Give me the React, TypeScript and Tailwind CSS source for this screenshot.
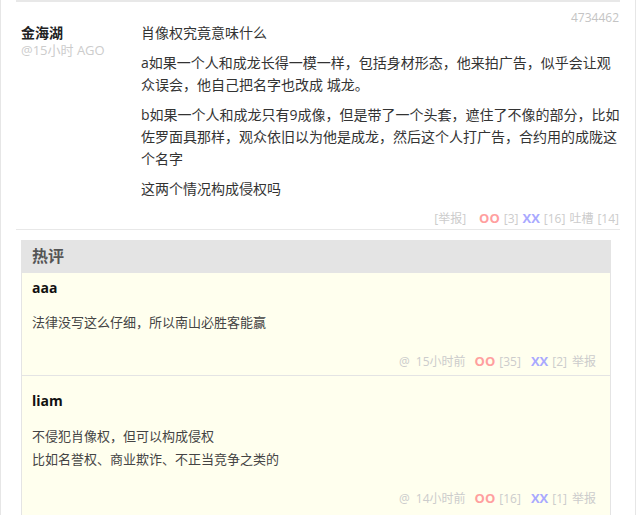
const FONT = "font-['Open_Sans','Noto_Sans_CJK_SC',sans-serif]";

type Hot = {
  name: string;
  lines: string[];
  time: string;
  oo: number;
  xx: number;
  pad: string;
  gap: string;
};

const HOT: Hot[] = [
  {
    name: "aaa",
    lines: ["法律没写这么仔细，所以南山必胜客能赢"],
    time: "15小时前",
    oo: 35,
    xx: 2,
    pad: "pt-[4px] pb-[3px]",
    gap: "mt-[12px]",
  },
  {
    name: "liam",
    lines: ["不侵犯肖像权，但可以构成侵权", "比如名誉权、商业欺诈、不正当竞争之类的"],
    time: "14小时前",
    oo: 16,
    xx: 1,
    pad: "pt-[14px] pb-[8px]",
    gap: "mt-[13px]",
  },
];

export default function App() {
  return (
    <div className={`w-[641px] h-[515px] overflow-hidden bg-white ${FONT}`}>
      <div className="w-[636px] h-full border-l border-r border-[#e6e6e6] px-[15px]">
        {/* 主评论 */}
        <div className="border-t-2 border-b border-[#e8e8e8] pr-[1px]">
          <div className="pt-[10px] text-right text-[12px] leading-[12px] text-[#c4c4c4]">
            4734462
          </div>
          <div className="flex -mt-[2px]">
            <div className="w-[125px] shrink-0 pl-[5px]">
              <p className="text-[14px] leading-[22px] font-bold text-[#222]">金海湖</p>
              <p className="text-[13px] leading-[12px] text-[#cccccc]">@15小时 AGO</p>
            </div>
            <div className="w-[481px] shrink-0 text-[14px] leading-[22px] text-[#333]">
              <p className="mb-[8px]">肖像权究竟意味什么</p>
              <p className="mb-[8px]">
                a如果一个人和成龙长得一模一样，包括身材形态，他来拍广告，似乎会让观众误会，他自己把名字也改成 城龙。
              </p>
              <p className="mb-[8px]">
                b如果一个人和成龙只有9成像，但是带了一个头套，遮住了不像的部分，比如佐罗面具那样，观众依旧以为他是成龙，然后这个人打广告，合约用的成陇这个名字
              </p>
              <p className="mb-[8px]">这两个情况构成侵权吗</p>
            </div>
          </div>
          <div className="flex justify-end items-baseline text-[12px] leading-[20px] text-[#cccccc]">
            <span>[举报]</span>
            <span className="ml-[13px] text-[13px] font-bold text-[#ff9f9f]">OO</span>
            <span className="ml-[4px]">[3]</span>
            <span className="ml-[4px] text-[13px] font-bold text-[#a9a9ff]">XX</span>
            <span className="ml-[4px]">[16]</span>
            <span className="ml-[4px]">吐槽</span>
            <span className="ml-[4px]">[14]</span>
          </div>
        </div>

        {/* 热评 */}
        <div className="mt-[10px] ml-[5px] mr-[9px] border border-t-0 border-[#e4e4e4]">
          <div className="h-[33px] bg-[#e4e4e4] pl-[10px] text-[16px] leading-[33px] font-bold text-[#555]">
            热评
          </div>
          {HOT.map((c, i) => (
            <div
              key={c.name}
              className={`bg-[#ffffee] pl-[10px] pr-[14px] ${c.pad} ${
                i > 0 ? "border-t border-[#e4e4e4]" : ""
              }`}
            >
              <p className="text-[14px] leading-[22px] font-bold text-[#111]">{c.name}</p>
              <div className={`${c.gap} text-[13px] leading-[23px] text-[#444]`}>
                {c.lines.map((l) => (
                  <p key={l}>{l}</p>
                ))}
              </div>
              <div className="mt-[17px] flex justify-end items-baseline text-[12px] leading-[20px] text-[#cccccc]">
                <span>@</span>
                <span className="ml-[6px]">{c.time}</span>
                <span className="ml-[9px] text-[13px] font-bold text-[#ff9f9f]">OO</span>
                <span className="ml-[4px]">[{c.oo}]</span>
                <span className="ml-[10px] text-[13px] font-bold text-[#a9a9ff]">XX</span>
                <span className="ml-[4px]">[{c.xx}]</span>
                <span className="ml-[5px]">举报</span>
              </div>
            </div>
          ))}
        </div>
      </div>
    </div>
  );
}
